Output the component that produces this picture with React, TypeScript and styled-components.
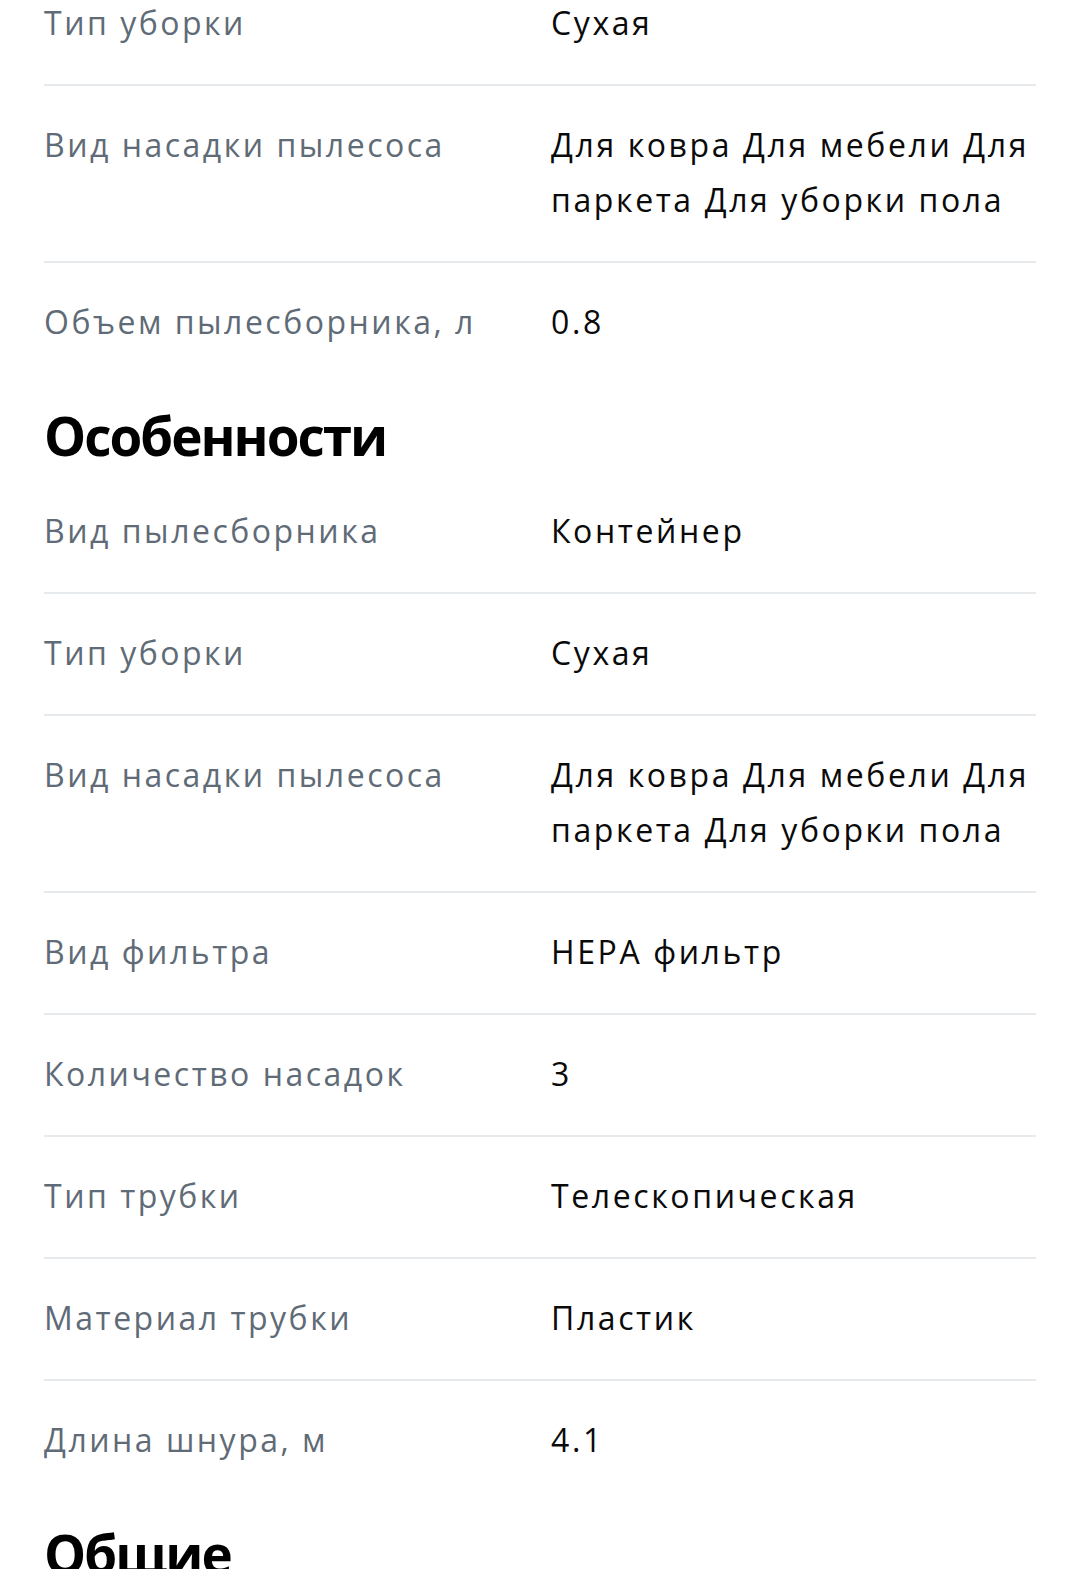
import styled, { createGlobalStyle } from "styled-components";

type Spec = { label: string; value: string };

const sections: { title?: string; items: Spec[] }[] = [
  {
    items: [
      { label: "Тип уборки", value: "Сухая" },
      {
        label: "Вид насадки пылесоса",
        value: "Для ковра Для мебели Для паркета Для уборки пола",
      },
      { label: "Объем пылесборника, л", value: "0.8" },
    ],
  },
  {
    title: "Особенности",
    items: [
      { label: "Вид пылесборника", value: "Контейнер" },
      { label: "Тип уборки", value: "Сухая" },
      {
        label: "Вид насадки пылесоса",
        value: "Для ковра Для мебели Для паркета Для уборки пола",
      },
      { label: "Вид фильтра", value: "HEPA фильтр" },
      { label: "Количество насадок", value: "3" },
      { label: "Тип трубки", value: "Телескопическая" },
      { label: "Материал трубки", value: "Пластик" },
      { label: "Длина шнура, м", value: "4.1" },
    ],
  },
  { title: "Общие", items: [] },
];

const GlobalStyle = createGlobalStyle`
  html, body {
    margin: 0;
    padding: 0;
    background: #ffffff;
  }
  body {
    font-family: "Open Sans", "Noto Sans", sans-serif;
    -webkit-font-smoothing: antialiased;
  }
`;

function App() {
  return (
    <>
      <GlobalStyle />
      <Page>
        {sections.map((section, i) => (
          <Section key={i}>
            {section.title && <Titulo>{section.title}</Titulo>}
            <Lista>
              {section.items.map((item, j) => (
                <Linha key={j}>
                  <Rotulo>{item.label}</Rotulo>
                  <Valor>{item.value}</Valor>
                </Linha>
              ))}
            </Lista>
          </Section>
        ))}
      </Page>
    </>
  );
}

const Page = styled.main`
  margin-top: -36px;
  padding: 0 44px;
  height: 1605px;
  overflow: hidden;
`;

const Section = styled.section`
  display: flex;
  flex-direction: column;
`;

const Titulo = styled.h2`
  margin: 21px 0 4px;
  font-size: 53px;
  line-height: 64px;
  font-weight: 700;
  color: #000000;
  letter-spacing: -2px;
`;

const Lista = styled.dl`
  margin: 0;
  display: flex;
  flex-direction: column;
`;

const Linha = styled.div`
  display: grid;
  grid-template-columns: 507px 1fr;
  padding: 31px 0 34px;
  border-bottom: 2px solid #e7eaed;
  font-size: 32px;
  line-height: 55px;
  &:last-child {
    border-bottom: none;
  }
`;

const Rotulo = styled.dt`
  margin: 0;
  color: #5f6b76;
  letter-spacing: 2.5px;
`;

const Valor = styled.dd`
  margin: 0;
  color: #0a0a0a;
  font-weight: 500;
  letter-spacing: 2.6px;
`;

export default App;
